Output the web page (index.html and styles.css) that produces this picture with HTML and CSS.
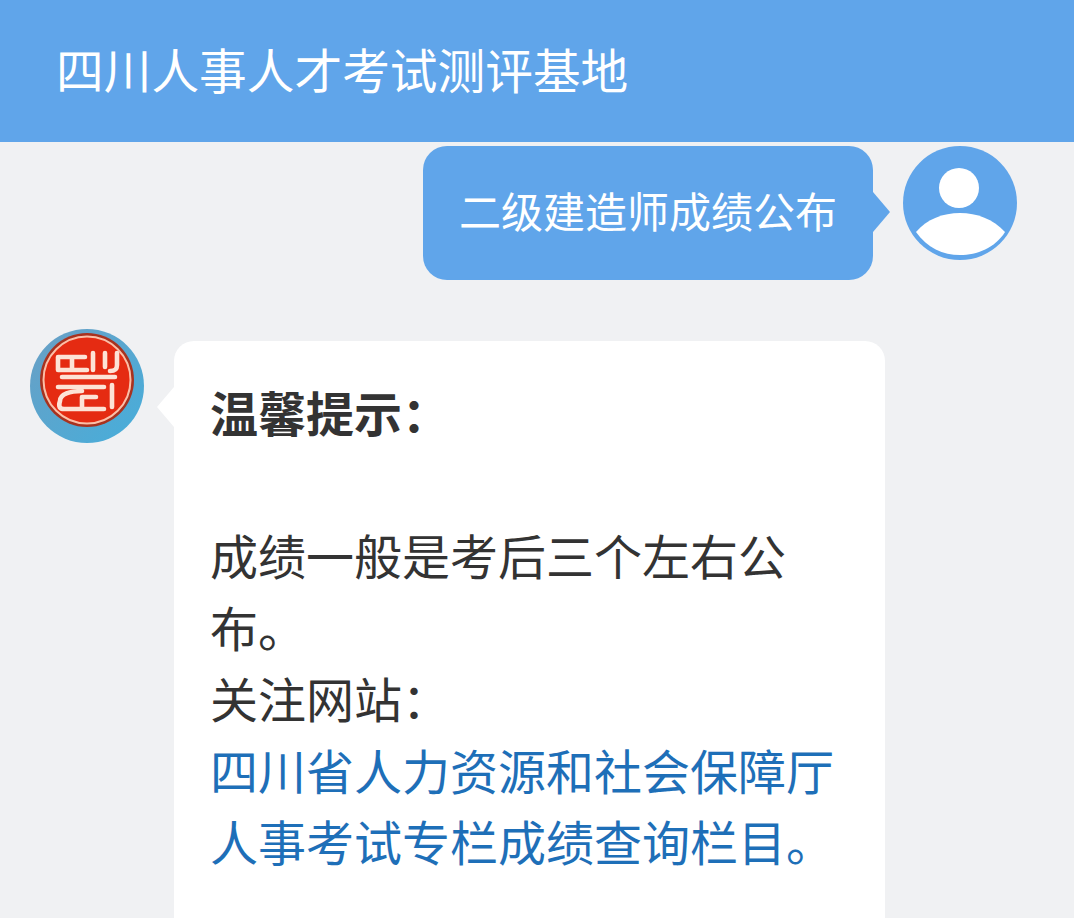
FILE: index.html
```html
<!DOCTYPE html>
<html lang="zh-CN">
<head>
    <meta charset="UTF-8">
    <title>四川人事人才考试测评基地</title>
    <link rel="stylesheet" href="styles.css">
</head>
<body>
    <div class="header">四川人事人才考试测评基地</div>

    <div class="chat">
        <!-- user question -->
        <div class="row row-user">
            <div class="bubble bubble-user">二级建造师成绩公布</div>
            <svg class="avatar" viewBox="0 0 114 114">
                <circle cx="57" cy="57" r="57" fill="#60a5ea"/>
                <circle cx="56" cy="42" r="20" fill="#fff"/>
                <path d="M13 86 C24 73 40 67 57 67 C74 67 90 73 102 86 C92 102 74 109 57 109 C40 109 24 102 13 86 Z" fill="#fff"/>
            </svg>
        </div>

        <!-- bot answer -->
        <div class="row row-bot">
            <svg class="avatar" viewBox="0 0 114 114">
                <defs>
                    <linearGradient id="rim" x1="0" y1="0" x2="1" y2="1">
                        <stop offset="0" stop-color="#6a9fc4"/>
                        <stop offset="1" stop-color="#46aedb"/>
                    </linearGradient>
                </defs>
                <circle cx="57" cy="57" r="57" fill="url(#rim)"/>
                <circle cx="57" cy="51" r="47" fill="#a8321f"/>
                <circle cx="57" cy="51" r="43.5" fill="#e52b12" stroke="#fbbfa8" stroke-width="2"/>
                <g fill="none" stroke="#fde3d6" stroke-width="4.6" stroke-linecap="round" stroke-linejoin="round">
                    <path d="M28 28 H55 M28 28 V41 H57 M42 28 V41"/>
                    <path d="M63 24 V41 M75 24 V38 M87 24 V36 C87 41 84 42 80 42"/>
                    <path d="M32 48 H85 M28 58 H74"/>
                    <path d="M52 62 C40 62 30 65 30 72 C28 78 30 80 34 80 H74 M52 68 V80 M52 68 H66"/>
                    <path d="M82 56 V78"/>
                </g>
            </svg>
            <div class="bubble bubble-bot">
                <p class="tip-title">温馨提示：</p>
                <p class="tip-gap">&nbsp;</p>
                <p>成绩一般是考后三个左右公布。</p>
                <p>关注网站：</p>
                <a class="tip-link" href="#">四川省人力资源和社会保障厅人事考试专栏成绩查询栏目。</a>
            </div>
        </div>
    </div>
</body>
</html>
```

FILE: styles.css
```css
html, body {
    height: 100%;
}
body {
    margin: 0;
    background: #f0f1f3;
    font-family: "Noto Sans CJK SC", "Noto Sans", sans-serif;
    overflow: hidden;
}
.header {
    height: 142px;
    line-height: 137px;
    padding-left: 56px;
    background: #60a5ea;
    color: #fff;
    font-size: 47.7px;
}
.chat {
    padding: 4px 57px 0 30px;
}
.row {
    display: flex;
    align-items: flex-start;
}
.row-user {
    justify-content: flex-end;
    gap: 30px;
}
.row-bot {
    margin-top: 49px;
    gap: 30px;
}
.avatar {
    width: 114px;
    height: 114px;
    flex: none;
}
.bubble {
    position: relative;
    box-sizing: border-box;
}
.bubble-user {
    width: 450px;
    height: 134px;
    line-height: 128px;
    text-align: center;
    background: #60a5ea;
    color: #fff;
    font-size: 42px;
    border-radius: 24px;
}
.bubble-user::after {
    content: "";
    position: absolute;
    right: -17px;
    top: 46px;
    border-left: 17px solid #60a5ea;
    border-top: 20px solid transparent;
    border-bottom: 20px solid transparent;
}
.bubble-bot {
    width: 711px;
    margin-top: 12px;
    padding: 35px 37px 80px 36px;
    background: #fff;
    color: #333;
    font-size: 48px;
    line-height: 71.5px;
    border-radius: 20px;
}
.bubble-bot::before {
    content: "";
    position: absolute;
    left: -17px;
    top: 46px;
    border-right: 17px solid #fff;
    border-top: 20px solid transparent;
    border-bottom: 20px solid transparent;
}
.bubble-bot p {
    margin: 0;
}
.bubble-bot .tip-title {
    font-weight: 700;
}
.tip-link {
    color: #1e6fb8;
    text-decoration: none;
}
```
